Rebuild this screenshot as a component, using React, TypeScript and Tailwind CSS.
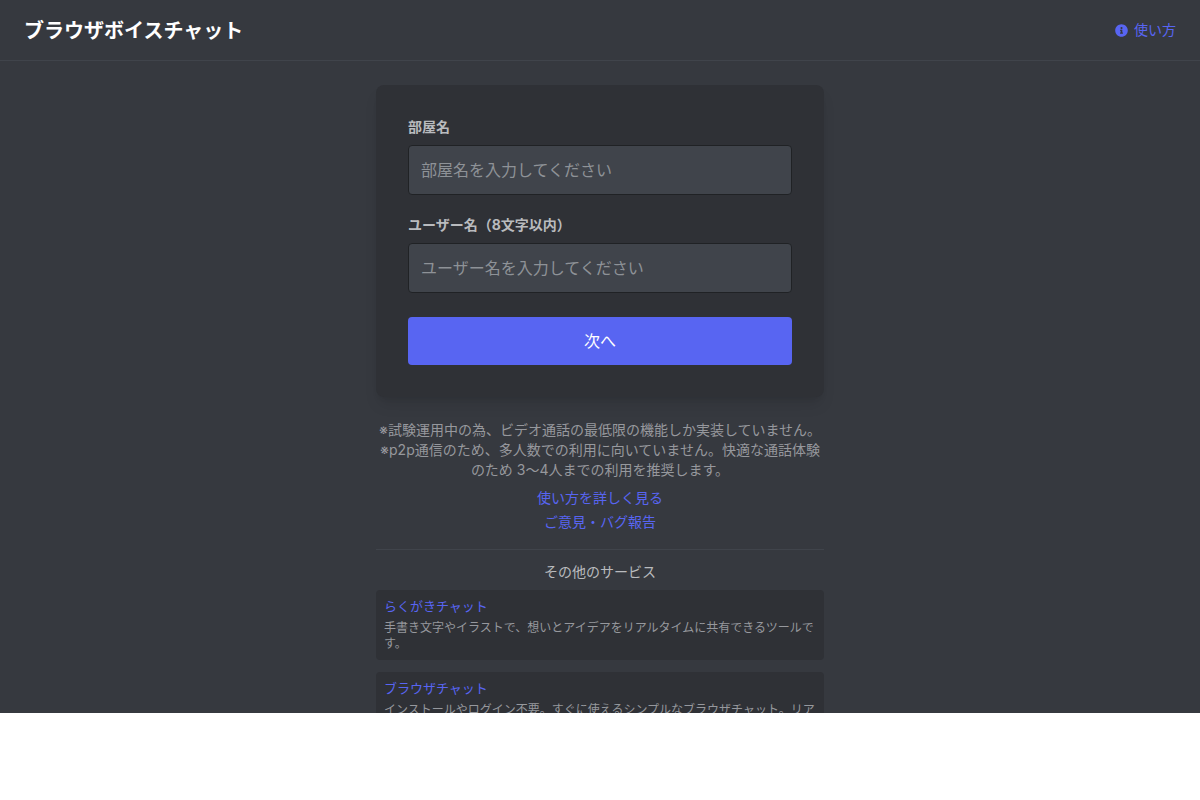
const font = "font-['Inter','Noto_Sans_CJK_JP',sans-serif]";

export default function App() {
  return (
    <div className={`h-[713px] overflow-hidden bg-[#36393f] ${font}`}>
      <header className="flex h-[61px] items-center justify-between border-b border-[#40444b] px-6">
        <h1 className="pt-px text-xl font-bold text-white">ブラウザボイスチャット</h1>
        <a className="flex items-center gap-1.5 text-sm text-[#5865f2]">
          <svg viewBox="0 0 512 512" className="h-[13px] w-[13px]" fill="currentColor">
            <path d="M256 8C119 8 8 119 8 256s111 248 248 248 248-111 248-248S393 8 256 8zm0 110a42 42 0 1 1 0 84 42 42 0 0 1 0-84zm56 254c0 7-5 12-12 12h-88c-7 0-12-5-12-12v-24c0-7 5-12 12-12h12v-64h-12c-7 0-12-5-12-12v-24c0-7 5-12 12-12h64c7 0 12 5 12 12v100h12c7 0 12 5 12 12v24z" />
          </svg>
          使い方
        </a>
      </header>

      <main className="mx-auto w-[448px] pt-6">
        <div className="rounded-lg bg-[#2f3136] p-8 shadow-lg">
          <label className="mb-[9px] block text-sm leading-[19px] font-bold text-[#b9bbbe]">部屋名</label>
          <input
            placeholder="部屋名を入力してください"
            className="mb-5 block h-[50px] w-full rounded border border-[#202225] bg-[#40444b] px-3 text-base text-white placeholder:text-[#8e9297]"
          />
          <label className="mb-[9px] block text-sm leading-[19px] font-bold text-[#b9bbbe]">ユーザー名（8文字以内）</label>
          <input
            placeholder="ユーザー名を入力してください"
            className="mb-6 block h-[50px] w-full rounded border border-[#202225] bg-[#40444b] px-3 text-base text-white placeholder:text-[#8e9297]"
          />
          <button className="h-12 w-full rounded bg-[#5865f2] text-base font-normal text-white">次へ</button>
        </div>

        <div className="mt-[23px] text-center text-sm leading-5 text-[#96989d]">
          <p>※試験運用中の為、ビデオ通話の最低限の機能しか実装していません。</p>
          <p>※p2p通信のため、多人数での利用に向いていません。快適な通話体験のため 3〜4人までの利用を推奨します。</p>
        </div>
        <div className="mt-2 flex flex-col items-center gap-1 text-sm leading-5 text-[#5865f2]">
          <a>使い方を詳しく見る</a>
          <a>ご意見・バグ報告</a>
        </div>

        <div className="mt-[17px] border-t border-[#40444b] pt-3">
          <h2 className="mb-2 text-center text-sm leading-5 text-[#b9bbbe]">その他のサービス</h2>
          <div className="mb-3 rounded bg-[#2f3136] p-2">
            <a className="block text-[13px] leading-4 text-[#5865f2]">らくがきチャット</a>
            <p className="mt-1.5 text-xs leading-4 text-[#96989d]">手書き文字やイラストで、想いとアイデアをリアルタイムに共有できるツールです。</p>
          </div>
          <div className="rounded bg-[#2f3136] p-2">
            <a className="block text-[13px] leading-4 text-[#5865f2]">ブラウザチャット</a>
            <p className="mt-1.5 text-xs leading-4 text-[#96989d]">インストールやログイン不要。すぐに使えるシンプルなブラウザチャット。リアルタイムで会話できます。</p>
          </div>
        </div>
      </main>
    </div>
  );
}
